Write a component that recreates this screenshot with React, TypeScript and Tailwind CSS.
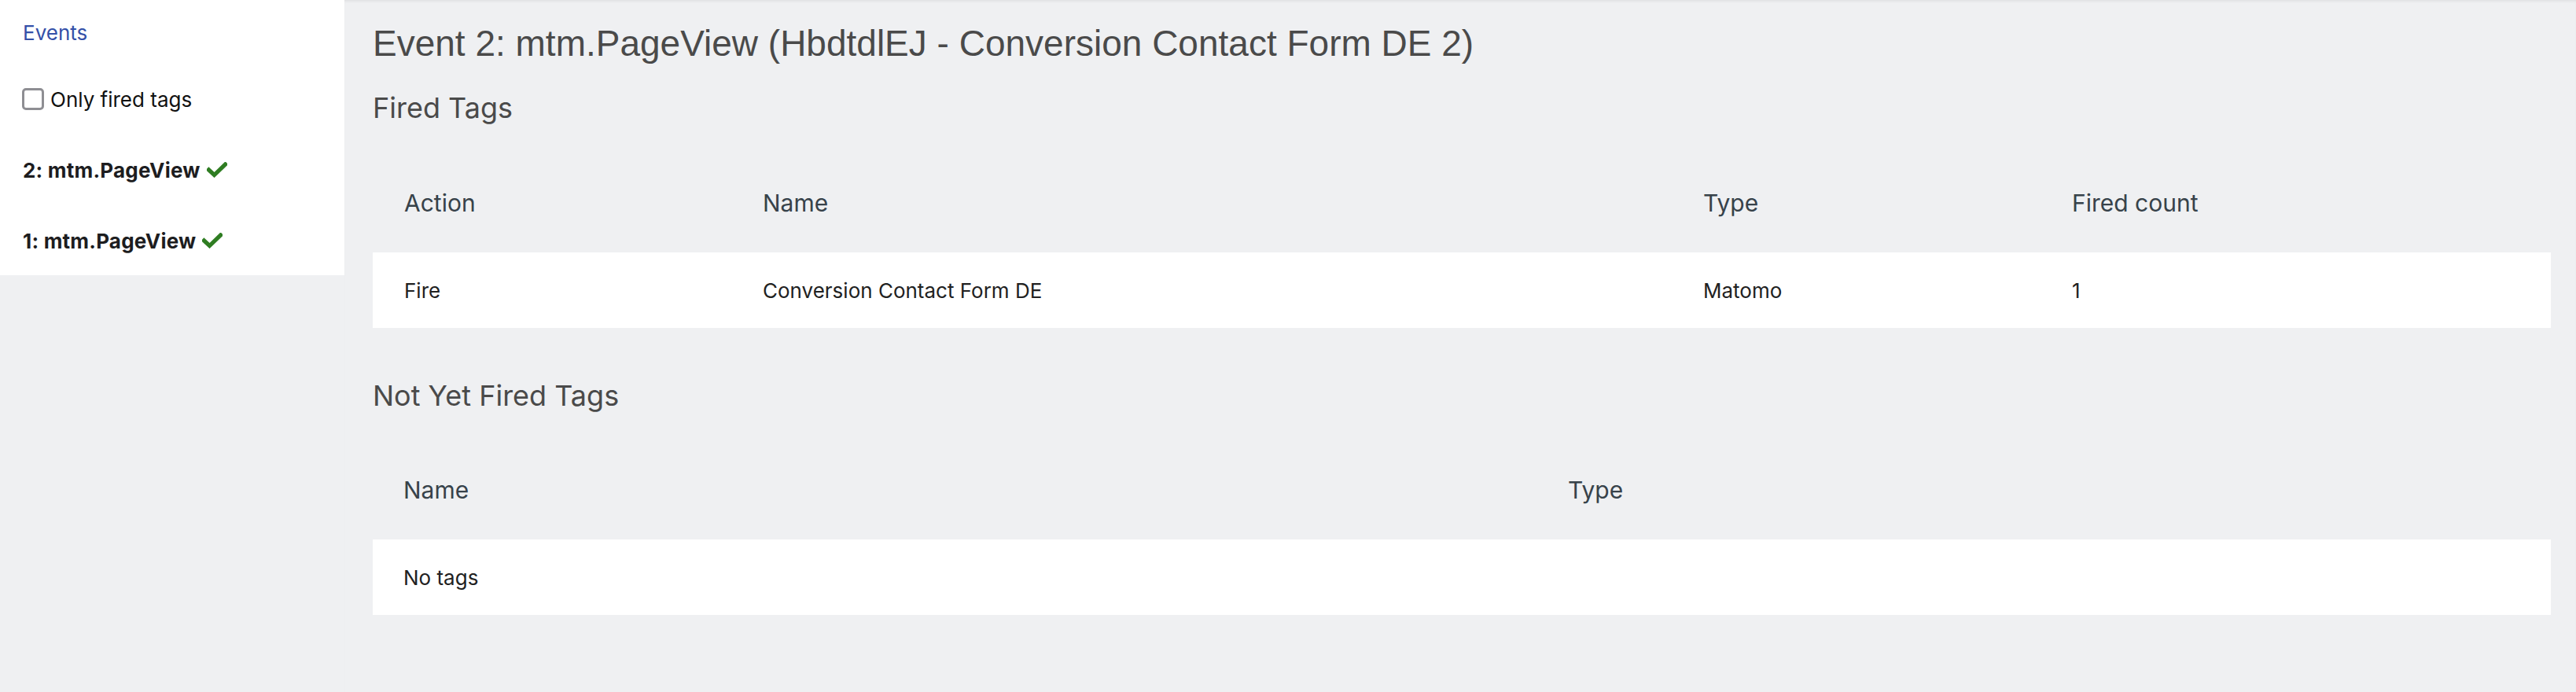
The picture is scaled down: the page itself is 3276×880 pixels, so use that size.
import { useState } from 'react'

const events = [
  { id: 2, name: 'mtm.PageView' },
  { id: 1, name: 'mtm.PageView' },
]

function Check() {
  return (
    <svg viewBox="0 0 26 20" className="w-[26px] h-[20px] ml-[8px] shrink-0">
      <path d="M2.5 10 L9.5 16.5 L23.5 3" fill="none" stroke="#2f7d22" strokeWidth="5.2" strokeLinecap="square" />
    </svg>
  )
}

export default function App() {
  const [onlyFired, setOnlyFired] = useState(false)

  return (
    <div className="flex min-h-[880px] bg-[#eff0f2] font-['Inter',sans-serif]">
      {/* Sidebar */}
      <div className="w-[438px] h-[350px] shrink-0 bg-white pl-[29px] pt-[22px]">
        <a className="block leading-[40px] text-[26px] text-[#3450a8]">Events</a>
        <label className="mt-[44px] flex items-center h-[40px] text-[26px] text-[#111] cursor-pointer">
          <input
            type="checkbox"
            checked={onlyFired}
            onChange={e => setOnlyFired(e.target.checked)}
            className="appearance-none w-[28px] h-[28px] -ml-[1px] mr-[8px] rounded-[5px] border-[3px] border-[#8e8e93] bg-white"
          />
          Only fired tags
        </label>
        {events.map(ev => (
          <div key={ev.id} className="mt-[50px] flex items-center h-[40px] text-[26px] font-bold tracking-[0.2px] text-[#1d1d1f]">
            {ev.id}: {ev.name}
            <Check />
          </div>
        ))}
      </div>

      {/* Main */}
      <div className="flex-1 pl-[36px] pr-[32px] pt-[25px] shadow-[inset_0_3px_3px_-1px_rgba(0,0,0,0.06)]">
        <h1 className="leading-[60px] text-[46px] text-[#4a4a4a] font-['Liberation_Sans',Arial,sans-serif]">Event 2: mtm.PageView (HbdtdlEJ - Conversion Contact Form DE 2)</h1>

        <h2 className="mt-[30px] leading-[44px] text-[36px] text-[#4a4a4a]">Fired Tags</h2>
        <table className="mt-[36px] w-full table-fixed border-collapse">
          <thead>
            <tr className="h-[126px] text-left text-[30px] text-[#37424a]">
              <th className="w-[456px] pl-[40px] font-normal">Action</th>
              <th className="w-[1196px] pl-[40px] font-normal">Name</th>
              <th className="w-[469px] pl-[40px] font-normal">Type</th>
              <th className="pl-[40px] font-normal">Fired count</th>
            </tr>
          </thead>
          <tbody>
            <tr className="h-[96px] bg-white text-[26px] text-[#212121]">
              <td className="pl-[40px]">Fire</td>
              <td className="pl-[40px]">Conversion Contact Form DE</td>
              <td className="pl-[40px]">Matomo</td>
              <td className="pl-[40px]">1</td>
            </tr>
          </tbody>
        </table>

        <h2 className="mt-[64px] leading-[44px] text-[36px] text-[#4a4a4a]">Not Yet Fired Tags</h2>
        <table className="mt-[35px] w-full table-fixed border-collapse">
          <thead>
            <tr className="h-[126px] text-left text-[30px] text-[#37424a]">
              <th className="w-[1480px] pl-[39px] font-normal">Name</th>
              <th className="pl-[40px] font-normal">Type</th>
            </tr>
          </thead>
          <tbody>
            <tr className="h-[96px] bg-white text-[26px] text-[#212121]">
              <td className="pl-[39px]" colSpan={2}>No tags</td>
            </tr>
          </tbody>
        </table>
      </div>
    </div>
  )
}
